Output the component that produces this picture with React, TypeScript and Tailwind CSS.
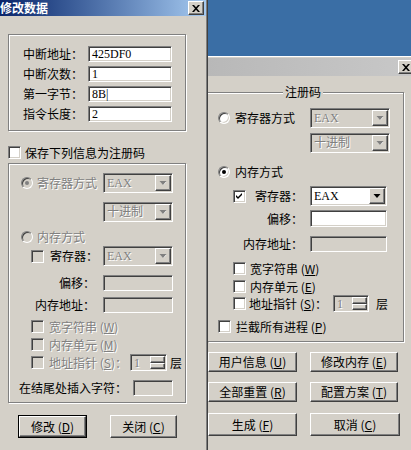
import React from 'react';

const sunken =
  'border border-t-[#808080] border-l-[#808080] border-b-white border-r-white shadow-[inset_1px_1px_0_#404040,inset_-1px_-1px_0_#d4d0c8]';
const raised =
  'border border-t-white border-l-white border-b-[#404040] border-r-[#404040] shadow-[inset_-1px_-1px_0_#808080] bg-[#d4d0c8]';
const etched = 'border border-[#808080] shadow-[inset_1px_1px_0_#fff,1px_1px_0_#fff]';
const grey = 'text-[#808080] [text-shadow:1px_1px_0_#fff]';
const mono = "font-['Liberation_Serif','Noto_Sans_CJK_SC',serif]";

type Box = { checked?: boolean; disabled?: boolean };

const Check = ({ checked, disabled }: Box) => (
  <span className={`w-[13px] h-[13px] shrink-0 flex items-center justify-center ${sunken} ${disabled ? 'bg-[#d4d0c8]' : 'bg-white'}`}>
    {checked && (
      <svg width="7" height="7" viewBox="0 0 7 7">
        <path d="M0 2L2 4L6 0V2L2 6L0 4Z" fill="#000" />
      </svg>
    )}
  </span>
);

const Radio = ({ checked, disabled }: Box) => (
  <span className={`w-[12px] h-[12px] rounded-full shrink-0 flex items-center justify-center ${sunken} ${disabled ? 'bg-[#d4d0c8]' : 'bg-white'}`}>
    {checked && <span className={`w-[4px] h-[4px] rounded-full ${disabled ? 'bg-[#808080]' : 'bg-black'}`} />}
  </span>
);

const Arrow = ({ disabled }: { disabled?: boolean }) => (
  <svg width="8" height="5" viewBox="0 0 8 5">
    {disabled && <path d="M1.5 1h6L4.5 4z" fill="#fff" />}
    <path d="M0.5 0h7L4 4z" fill={disabled ? '#808080' : '#000'} />
  </svg>
);

const Combo = ({ value, w, disabled }: { value: string; w: string; disabled?: boolean }) => (
  <div className={`h-[20px] shrink-0 flex items-center pl-[3px] pr-[1px] ${w} ${sunken} ${disabled ? 'bg-[#d4d0c8]' : 'bg-white'}`}>
    <span className={`${mono} ${disabled ? grey : ''}`}>{value}</span>
    <span className={`ml-auto w-[16px] h-[16px] flex items-center justify-center ${raised}`}>
      <Arrow disabled={disabled} />
    </span>
  </div>
);

const Field = ({ value, w, h = 'h-[16px]', disabled }: { value?: string; w: string; h?: string; disabled?: boolean }) => (
  <div className={`shrink-0 flex items-center pl-[3px] ${w} ${h} ${sunken} ${disabled ? 'bg-[#d4d0c8]' : 'bg-white'}`}>
    <span className={mono}>{value}</span>
  </div>
);

const Spin = ({ w }: { w: string }) => (
  <div className={`h-[17px] shrink-0 flex items-center pl-[3px] pr-[1px] ${w} ${sunken} bg-[#d4d0c8]`}>
    <span className={`${mono} ${grey}`}>1</span>
    <span className="ml-auto w-[15px] h-[13px] flex flex-col">
      <span className={`h-[7px] ${raised}`} />
      <span className={`h-[6px] ${raised}`} />
    </span>
  </div>
);

const Btn = ({ label, k, w, h, def }: { label: string; k: string; w: string; h: string; def?: boolean }) => (
  <div className={`${w} ${h} shrink-0 ${def ? 'border border-black' : ''}`}>
    <div className={`w-full h-full flex items-center justify-center ${raised}`}>
      {label} ({<u>{k}</u>})
    </div>
  </div>
);

const Mn = ({ label, k }: { label: string; k: string }) => (
  <>
    {label} (<u>{k}</u>)
  </>
);

const CloseBtn = () => (
  <span className={`ml-auto w-[16px] h-[14px] shrink-0 flex items-center justify-center ${raised}`}>
    <svg width="8" height="7" viewBox="0 0 8 7">
      <path d="M0 0h2l2 2.3L6 0h2L5 3.5L8 7H6L4 4.7L2 7H0L3 3.5z" fill="#000" />
    </svg>
  </span>
);

function LeftDialog() {
  return (
    <div className="w-[208px] h-[450px] shrink-0 flex flex-col bg-[#d4d0c8] pr-[1px] border-r border-r-[#404040] shadow-[inset_-1px_0_0_#808080]">
      <div className="h-[16px] shrink-0 flex items-center pr-[2px] bg-linear-to-r from-[#0a246a] to-[#a6caf0]">
        <span className="text-white font-bold">修改数据</span>
        <CloseBtn />
      </div>
      <div className="flex flex-col pl-[8px]">
        <div className={`mt-[18px] w-[178px] pt-[11px] pb-[8px] pl-[14px] flex flex-col gap-[4px] ${etched}`}>
          {[
            ['中断地址：', '425DF0'],
            ['中断次数：', '1'],
            ['第一字节：', '8B|'],
            ['指令长度：', '2'],
          ].map(([l, v]) => (
            <div key={l} className="h-[16px] flex items-center">
              <span className="w-[65px] shrink-0">{l}</span>
              <Field value={v} w="w-[84px]" />
            </div>
          ))}
        </div>

        <div className="mt-[15px] h-[13px] flex items-center gap-[4px]">
          <Check />
          <span>保存下列信息为注册码</span>
        </div>

        <div className={`mt-[4px] w-[178px] pt-[9px] pb-[6px] flex flex-col ${etched}`}>
          <div className="h-[20px] flex items-center">
            <div className="w-[94px] pl-[12px] flex items-center gap-[4px] whitespace-nowrap">
              <Radio checked disabled />
              <span className={grey}>寄存器方式</span>
            </div>
            <Combo value="EAX" w="w-[70px]" disabled />
          </div>
          <div className="mt-[9px] h-[20px] flex items-center">
            <div className="w-[94px]" />
            <Combo value="十进制" w="w-[70px]" disabled />
          </div>
          <div className="mt-[7px] h-[16px] pl-[12px] flex items-center gap-[4px]">
            <Radio disabled />
            <span className={grey}>内存方式</span>
          </div>
          <div className="mt-[1px] h-[20px] flex items-center">
            <div className="w-[94px] pl-[22px] flex items-center gap-[6px] whitespace-nowrap">
              <Check disabled />
              <span>寄存器：</span>
            </div>
            <Combo value="EAX" w="w-[70px]" disabled />
          </div>
          <div className="mt-[9px] h-[16px] flex items-center">
            <span className="w-[94px] pr-[8px] text-right">偏移：</span>
            <Field w="w-[70px]" disabled />
          </div>
          <div className="mt-[6px] h-[16px] flex items-center">
            <span className="w-[94px] pr-[8px] text-right">内存地址：</span>
            <Field w="w-[70px]" disabled />
          </div>
          <div className="mt-[7px] h-[13px] pl-[22px] flex items-center gap-[5px]">
            <Check disabled />
            <span className={grey}><Mn label="宽字符串" k="W" /></span>
          </div>
          <div className="mt-[5px] h-[13px] pl-[22px] flex items-center gap-[5px]">
            <Check disabled />
            <span className={grey}><Mn label="内存单元" k="M" /></span>
          </div>
          <div className="mt-[3px] h-[17px] flex items-center">
            <div className="w-[121px] pl-[22px] flex items-center gap-[5px] whitespace-nowrap">
              <Check disabled />
              <span className={grey}><Mn label="地址指针" k="S" />：</span>
            </div>
            <Spin w="w-[37px]" />
            <span className="ml-[3px]">层</span>
          </div>
          <div className="mt-[9px] h-[16px] flex items-center">
            <span className="w-[124px] pl-[10px] whitespace-nowrap">在结尾处插入字符：</span>
            <Field w="w-[40px]" disabled />
          </div>
        </div>

        <div className="mt-[12px] pl-[10px] flex gap-[23px]">
          <Btn label="修改" k="D" w="w-[69px]" h="h-[23px]" def />
          <Btn label="关闭" k="C" w="w-[67px]" h="h-[23px]" />
        </div>
      </div>
    </div>
  );
}

function RightWindow() {
  return (
    <div className="flex-1 flex flex-col overflow-hidden">
      <div className="h-[56px] shrink-0" />
      <div className="flex-1 w-[206px] flex flex-col bg-[#d4d0c8] border-t border-t-white pt-[1px]">
        <div className="h-[18px] shrink-0 flex items-center bg-linear-to-r from-[#b8b8b8] to-[#c8c8c8]">
          <CloseBtn />
        </div>
        <div className="mt-[16px] w-[196px] pb-[8px] flex flex-col border-t border-r border-b border-[#808080] shadow-[inset_0_1px_0_#fff,1px_1px_0_#fff]">
          <span className="-mt-[8px] ml-[75px] w-fit px-[2px] h-[14px] bg-[#d4d0c8]">注册码</span>
          <div className="mt-[9px] h-[20px] flex items-center">
            <div className="w-[102px] pl-[10px] flex items-center gap-[5px] whitespace-nowrap">
              <Radio />
              <span>寄存器方式</span>
            </div>
            <Combo value="EAX" w="w-[80px]" disabled />
          </div>
          <div className="mt-[5px] h-[20px] flex items-center">
            <div className="w-[102px]" />
            <Combo value="十进制" w="w-[80px]" disabled />
          </div>
          <div className="mt-[11px] h-[16px] pl-[10px] flex items-center gap-[5px]">
            <Radio checked />
            <span>内存方式</span>
          </div>
          <div className="mt-[6px] h-[20px] flex items-center">
            <div className="w-[102px] pl-[25px] pr-[7px] flex items-center whitespace-nowrap">
              <Check checked />
              <span className="ml-auto">寄存器：</span>
            </div>
            <Combo value="EAX" w="w-[77px]" />
          </div>
          <div className="mt-[4px] h-[17px] flex items-center">
            <span className="w-[102px] pr-[7px] text-right">偏移：</span>
            <Field w="w-[77px]" h="h-[17px]" />
          </div>
          <div className="mt-[9px] h-[16px] flex items-center">
            <span className="w-[102px] pr-[7px] text-right">内存地址：</span>
            <Field w="w-[77px]" disabled />
          </div>
          <div className="mt-[10px] h-[13px] pl-[25px] flex items-center gap-[4px]">
            <Check />
            <span><Mn label="宽字符串" k="W" /></span>
          </div>
          <div className="mt-[5px] h-[13px] pl-[25px] flex items-center gap-[4px]">
            <Check />
            <span><Mn label="内存单元" k="E" /></span>
          </div>
          <div className="mt-[2px] h-[17px] flex items-center">
            <div className="w-[125px] pl-[25px] flex items-center gap-[3px] whitespace-nowrap">
              <Check />
              <span><Mn label="地址指针" k="S" />：</span>
            </div>
            <Spin w="w-[36px]" />
            <span className="ml-[7px]">层</span>
          </div>
          <div className="mt-[8px] h-[13px] pl-[10px] flex items-center gap-[5px]">
            <Check />
            <span><Mn label="拦截所有进程" k="P" /></span>
          </div>
        </div>

        <div className="mt-[10px] flex flex-col">
          <div className="flex gap-[13px]">
            <Btn label="用户信息" k="U" w="w-[89px]" h="h-[20px]" />
            <Btn label="修改内存" k="E" w="w-[88px]" h="h-[20px]" />
          </div>
          <div className="mt-[10px] flex gap-[13px]">
            <Btn label="全部重置" k="R" w="w-[89px]" h="h-[20px]" />
            <Btn label="配置方案" k="T" w="w-[88px]" h="h-[20px]" />
          </div>
          <div className="mt-[11px] flex gap-[13px]">
            <Btn label="生成" k="F" w="w-[89px]" h="h-[23px]" />
            <Btn label="取消" k="C" w="w-[90px]" h="h-[23px]" />
          </div>
        </div>
      </div>
    </div>
  );
}

export default function App() {
  return (
    <div className="w-[411px] h-[450px] overflow-hidden flex bg-[#3a6ea5] text-[12px] leading-[14px] text-black font-['Noto_Sans_CJK_SC',sans-serif]">
      <LeftDialog />
      <RightWindow />
    </div>
  );
}
